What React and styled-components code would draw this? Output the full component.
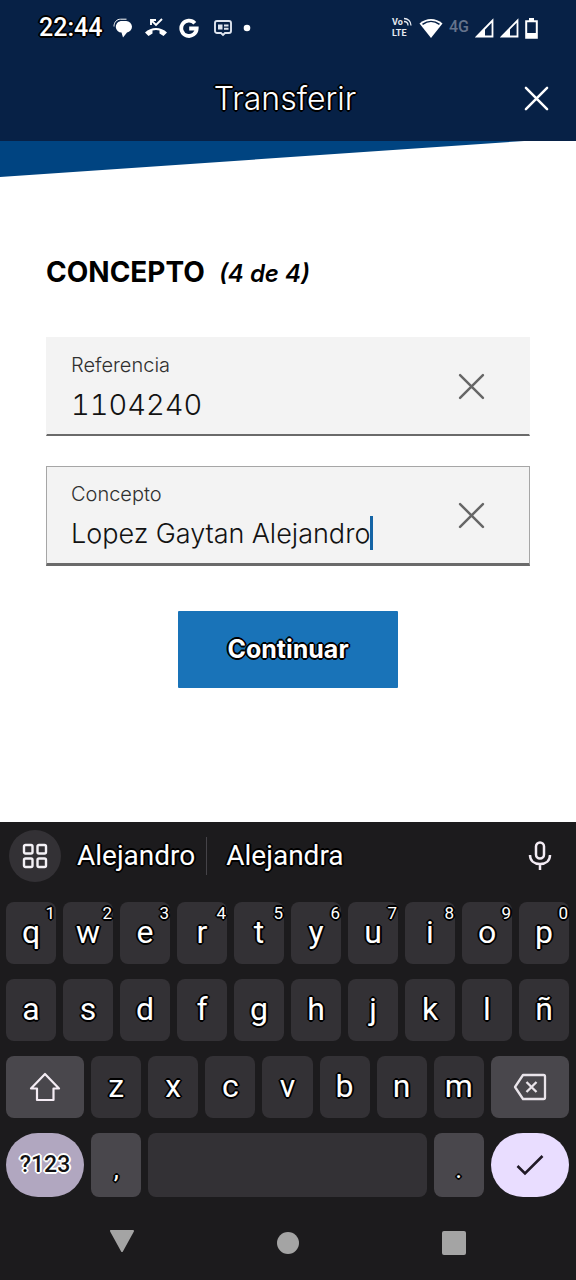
import React, { useState } from 'react';
import styled, { createGlobalStyle, css } from 'styled-components';

const GlobalStyle = createGlobalStyle`
  *, *::before, *::after { box-sizing: border-box; }
  body { margin: 0; background: #ffffff; }
  button, input { font: inherit; color: inherit; border: 0; padding: 0; margin: 0; background: none; }
  button { cursor: pointer; }
`;

const bankFont = css`font-family: Inter, "Open Sans", sans-serif;`;
const systemFont = css`font-family: Roboto, "Noto Sans", sans-serif;`;

const outline = css`
  text-shadow: ${({ $halo = '#000000' }) =>
    [[-1, -1], [0, -1], [1, -1], [-1, 0], [1, 0], [-1, 1], [0, 1], [1, 1], [-2, 0], [2, 0], [0, -2], [0, 2]]
      .map(([x, y]) => `${x}px ${y}px 0 ${$halo}`)
      .join(', ')};
`;

const Screen = styled.div`
  ${bankFont}
  min-height: 100vh;
  display: flex;
  flex-direction: column;
  color: #121212;
`;

const Header = styled.header`
  background: #072146;
  color: #ffffff;
`;

const StatusBar = styled.div`
  ${systemFont}
  display: flex;
  align-items: center;
  justify-content: space-between;
  height: 56px;
  padding: 0 38px 0 39px;
`;

const StatusGroup = styled.div`
  display: flex;
  align-items: center;
  gap: ${({ $gap }) => $gap}px;
`;

const Clock = styled.time`
  ${outline}
  font-size: 25px;
  font-weight: 500;
  line-height: 28px;
`;

const Network = styled.span`
  color: #65738c;
  font-size: 16px;
  font-weight: 500;
  line-height: 20px;
  padding-bottom: 3px;
`;

const TitleBar = styled.div`
  display: grid;
  grid-template-columns: 74px 1fr 80px;
  align-items: center;
  height: 85px;
`;

const Title = styled.h1`
  ${outline}
  grid-column: 2;
  margin: 0;
  font-size: 32px;
  font-weight: 300;
  line-height: 40px;
  text-align: center;
`;

const IconButton = styled.button`
  display: grid;
  place-items: center;
  height: 48px;
`;

const Wedge = styled.div`
  height: 36px;
  background: #004481;
  clip-path: polygon(0 0, 91% 0, 0 100%);
`;

const Form = styled.form`
  flex: 1;
  display: flex;
  flex-direction: column;
  padding: 78px 46px 40px;
`;

const Heading = styled.h2`
  display: flex;
  align-items: baseline;
  gap: 14px;
  margin: 0 0 46px;
  color: #000000;
  font-size: 28px;
  font-weight: 700;
  line-height: 34px;
`;

const Step = styled.em`
  font-size: 24px;
  font-weight: 600;
`;

const Fields = styled.div`
  display: grid;
  gap: 30px;
`;

const FieldBox = styled.div`
  display: grid;
  grid-template-columns: 1fr 116px;
  background: #f3f3f3;
  border: 1px solid ${({ $active }) => ($active ? '#a6a6a6' : '#f3f3f3')};
  border-bottom: ${({ $active }) => ($active ? 3 : 2)}px solid #6a6a6a;
`;

const FieldText = styled.div`
  display: grid;
  gap: 10px;
  padding: 15px 0 13px 24px;
`;

const Label = styled.label`
  color: #303030;
  font-size: 20px;
  font-weight: 300;
  line-height: 24px;
`;

const ValueLine = styled.div`
  display: flex;
  height: 34px;
`;

const Value = styled.input`
  field-sizing: content;
  max-width: 100%;
  height: 34px;
  font-size: ${({ $numeric }) => ($numeric ? 29 : 27)}px;
  font-variant-numeric: tabular-nums;
  font-weight: 300;
  outline: none;
  caret-color: transparent;
`;

const Caret = styled.span`
  flex: none;
  width: 3px;
  background: #1464a5;
`;

const ClearButton = styled(IconButton)`
  height: 100%;
`;

const SubmitButton = styled.button`
  ${outline}
  align-self: center;
  margin-top: 45px;
  padding: 0 49px 2px;
  height: 77px;
  border-radius: 1px;
  background: #1973b8;
  color: #ffffff;
  font-size: 25px;
  font-weight: 700;
  line-height: 32px;
`;

const Keyboard = styled.section`
  ${systemFont}
  background: #1c1b1d;
  color: #ffffff;
`;

const Suggestions = styled.div`
  display: flex;
  align-items: center;
  height: 80px;
  padding: 0 24px 12px 9px;
`;

const MenuButton = styled.button`
  display: grid;
  place-items: center;
  width: 52px;
  height: 52px;
  margin-right: 5px;
  border-radius: 50%;
  background: #333135;
`;

const Suggestion = styled.button`
  ${outline}
  padding: 0 11px;
  font-size: 28px;
  line-height: 38px;
`;

const Divider = styled.span`
  width: 1px;
  height: 38px;
  margin-right: 8px;
  background: #454348;
`;

const MicButton = styled(IconButton)`
  margin-left: auto;
`;

const Keys = styled.div`
  display: grid;
  gap: 15px;
  padding: 0 7px 0 6px;
`;

const KeyRow = styled.div`
  display: flex;
  gap: 7px;
`;

const tones = {
  letter: '#333135',
  modifier: '#49474c',
  mode: '#b1a7c0',
  enter: '#e9ddff',
};

const Key = styled.button`
  ${outline}
  position: relative;
  display: grid;
  place-items: center;
  flex: ${({ $span = 50 }) => $span} 1 0;
  min-width: 0;
  height: ${({ $tall }) => ($tall ? 64 : 62)}px;
  border-radius: ${({ $round }) => ($round ? 32 : 8)}px;
  background: ${({ $tone = 'letter' }) => tones[$tone]};
  font-size: 32px;
  line-height: 38px;
`;

const LetterKey = styled(Key)`
  padding-bottom: 3px;
`;

const ModeKey = styled(Key)`
  color: #121212;
  font-size: 23px;
  font-weight: 500;
`;

const PunctuationKey = styled(Key)`
  align-items: end;
  padding-bottom: 9px;
  font-size: 26px;
`;

const Hint = styled.span`
  position: absolute;
  top: 1px;
  right: 1px;
  font-size: 17px;
  line-height: 20px;
`;

const NavBar = styled.nav`
  display: grid;
  grid-template-columns: repeat(3, 1fr);
  align-items: center;
  height: 83px;
  padding: 8px 39px 0;
`;

const CloseIcon = ({ size, color, width }) => (
  <svg width={size} height={size} viewBox="0 0 26 26" fill="none" stroke={color} strokeWidth={width} strokeLinecap="round">
    <path d="M2 2 24 24M24 2 2 24" />
  </svg>
);

const ChatIcon = () => (
  <svg width="20" height="20" viewBox="0 0 20 20" fill="#fff">
    <path d="M7.500 3H13a5.800 5.800 0 0 1 6 5.800c0 3-2.300 5-5 5.700L10 19.500 8.500 14.500A5.800 5.800 0 0 1 7.500 3Z" />
    <path d="M1 8.500C1 4 4 1.200 7.500 1.200h6" fill="none" stroke="#fff" strokeWidth="1" />
    <path d="M2 7.500C2.500 4 5 2.500 8 2.500h6" fill="none" stroke="#072146" strokeWidth=".7" />
  </svg>
);

const MissedCallIcon = () => (
  <svg width="24" height="20" viewBox="0 0 24 20">
    <path d="M1 14.500C7 8.500 17 8.500 23 14.500l-3.500 3.500-4-2.500v-3c-2.500-.8-4.500-.8-7 0v3l-4 2.500Z" fill="#fff" />
    <path d="M7 7V2h5M7 2l5 5 6-6" fill="none" stroke="#fff" strokeWidth="1.900" />
  </svg>
);

const GoogleIcon = () => (
  <svg width="20" height="20" viewBox="0 0 20 20" fill="none" stroke="#fff" strokeWidth="3.800">
    <path d="M15.800 5.200A7.700 7.700 0 1 0 17.700 10.500H10.200" />
  </svg>
);

const CardIcon = () => (
  <svg width="22" height="18" viewBox="-4 0 22 18">
    <path d="M3 2h12a2 2 0 0 1 2 2v8a2 2 0 0 1-2 2h-4l-2 2-2-2H3a2 2 0 0 1-2-2V4a2 2 0 0 1 2-2Z" fill="none" stroke="#dfe5ef" strokeWidth="1.900" />
    <path d="M4 5.500h4.500v5H4zM10 5.500h4.500v2H10zM10 8.700h4.500v2H10z" fill="#dfe5ef" />
  </svg>
);

const DotIcon = () => (
  <svg width="8" height="8" viewBox="0 0 8 8"><circle cx="4" cy="4" r="3.300" fill="#fff" /></svg>
);

const VolteIcon = () => (
  <svg width="22" height="26" viewBox="0 0 22 26" fill="#e6eaf1" fontFamily="Roboto, sans-serif" fontWeight="700">
    <text x="1" y="10" fontSize="9">Vo</text>
    <text x="1" y="21" fontSize="9">LTE</text>
    <path d="M13 3.500c4 0 7 3 7 7M13 6.500c2.500 0 4 1.500 4 4" fill="none" stroke="#e6eaf1" strokeWidth="1.300" />
  </svg>
);

const WifiIcon = () => (
  <svg width="24" height="20" viewBox="0 0 24 20">
    <path d="M.5 5.500C7-.5 17-.5 23.500 5.500L12 20Z" fill="#fff" />
    <path d="M3.500 6.400c5.200-3.900 11.800-3.900 17 0" fill="none" stroke="#072146" strokeWidth="1.600" />
  </svg>
);

const SignalIcon = () => (
  <svg width="19" height="20" viewBox="0 0 19 20">
    <path d="M2 18.500 17.500 2.500v16Z" fill="none" stroke="#fff" strokeWidth="1.800" />
    <path d="M1 19 10 9.500V19Z" fill="#fff" />
  </svg>
);

const BatteryIcon = () => (
  <svg width="13" height="21" viewBox="0 0 13 21">
    <path d="M1.200 3.200h10.600v16.600H1.200Z" fill="none" stroke="#fff" strokeWidth="2" />
    <path d="M4 0h5v3H4ZM1 15h11v5H1Z" fill="#fff" />
  </svg>
);

const GridIcon = () => (
  <svg width="26" height="26" viewBox="0 0 26 26" fill="none" stroke="#f4f1f6" strokeWidth="2.400">
    {[[2, 2], [15.5, 2], [2, 15.5], [15.5, 15.5]].map(([x, y]) => (
      <rect key={`${x}-${y}`} x={x} y={y} width="8.500" height="8.500" rx="1.500" />
    ))}
  </svg>
);

const MicIcon = () => (
  <svg width="24" height="30" viewBox="0 0 24 30" fill="none" stroke="#f4ecf4" strokeWidth="2.500">
    <rect x="8" y="1.500" width="8" height="16" rx="4" />
    <path d="M2 14c0 5.500 4 9 10 9s10-3.500 10-9M12 23v6" />
  </svg>
);

const ShiftIcon = () => (
  <svg width="32" height="30" viewBox="0 0 32 30" fill="none" stroke="#f4ecf4" strokeWidth="2.200" strokeLinejoin="round">
    <path d="M16 2 30 16.500H24.500V28H8V16.500H2Z" />
  </svg>
);

const BackspaceIcon = () => (
  <svg width="34" height="28" viewBox="0 0 34 28" fill="none" stroke="#e9e4ea" strokeWidth="2.300" strokeLinejoin="round">
    <path d="M10 2H30.500A1.500 1.500 0 0 1 32 3.500V24.500A1.500 1.500 0 0 1 30.500 26H10L2 14Z" />
    <path d="M13.500 9 23.500 19M23.500 9 13.500 19" />
  </svg>
);

const CheckIcon = () => (
  <svg width="28" height="22" viewBox="0 0 28 22" fill="none" stroke="#201a26" strokeWidth="2.600">
    <path d="M1.500 12 9 19.500 26.500 2" />
  </svg>
);

const BackIcon = () => (
  <svg width="26" height="26" viewBox="0 0 26 26">
    <path d="M2 1H24L13 21Z" fill="#a4a4a4" stroke="#a4a4a4" strokeWidth="2" strokeLinejoin="round" />
  </svg>
);

const HomeIcon = () => (
  <svg width="22" height="22" viewBox="0 0 22 22"><circle cx="11" cy="11" r="11" fill="#a4a4a4" /></svg>
);

const RecentIcon = () => (
  <svg width="24" height="24" viewBox="0 0 24 24"><rect width="24" height="24" rx="2" fill="#a4a4a4" /></svg>
);

function Field({ id, label, initial, active, numeric }) {
  const [value, setValue] = useState(initial);
  return (
    <FieldBox $active={active}>
      <FieldText>
        <Label htmlFor={id}>{label}</Label>
        <ValueLine>
          <Value id={id} $numeric={numeric} value={value} onChange={(e) => setValue(e.target.value)} />
          {active && <Caret />}
        </ValueLine>
      </FieldText>
      <ClearButton type="button" aria-label={`Borrar ${label}`} onClick={() => setValue('')}>
        <CloseIcon size={27} color="#666666" width={2.4} />
      </ClearButton>
    </FieldBox>
  );
}

export default function App() {
  return (
    <Screen>
      <GlobalStyle />
      <Header>
        <StatusBar>
          <StatusGroup $gap={11}>
            <Clock>22:44</Clock>
            <ChatIcon />
            <MissedCallIcon />
            <GoogleIcon />
            <CardIcon />
            <DotIcon />
          </StatusGroup>
          <StatusGroup $gap={6}>
            <VolteIcon />
            <WifiIcon />
            <Network>4G</Network>
            <SignalIcon />
            <SignalIcon />
            <BatteryIcon />
          </StatusGroup>
        </StatusBar>
        <TitleBar>
          <Title>Transferir</Title>
          <IconButton type="button" aria-label="Cerrar">
            <CloseIcon size={25} color="#ffffff" width={2.6} />
          </IconButton>
        </TitleBar>
      </Header>
      <Wedge />
      <Form onSubmit={(e) => e.preventDefault()}>
        <Heading>
          CONCEPTO <Step>(4 de 4)</Step>
        </Heading>
        <Fields>
          <Field id="referencia" label="Referencia" initial="1104240" numeric />
          <Field id="concepto" label="Concepto" initial="Lopez Gaytan Alejandro" active />
        </Fields>
        <SubmitButton type="submit">Continuar</SubmitButton>
      </Form>
      <Keyboard>
        <Suggestions>
          <MenuButton type="button" aria-label="Menú"><GridIcon /></MenuButton>
          <Suggestion type="button">Alejandro</Suggestion>
          <Divider />
          <Suggestion type="button">Alejandra</Suggestion>
          <MicButton type="button" aria-label="Dictar"><MicIcon /></MicButton>
        </Suggestions>
        <Keys>
          <KeyRow>
            {[...'qwertyuiop'].map((letter, i) => (
              <LetterKey type="button" key={letter}>
                {letter}
                <Hint>{(i + 1) % 10}</Hint>
              </LetterKey>
            ))}
          </KeyRow>
          <KeyRow>
            {[...'asdfghjklñ'].map((letter) => <LetterKey type="button" key={letter}>{letter}</LetterKey>)}
          </KeyRow>
          <KeyRow>
            <Key type="button" $span={78} $tone="modifier" aria-label="Mayúsculas"><ShiftIcon /></Key>
            {[...'zxcvbnm'].map((letter) => <LetterKey type="button" key={letter}>{letter}</LetterKey>)}
            <Key type="button" $span={78} $tone="modifier" aria-label="Retroceso"><BackspaceIcon /></Key>
          </KeyRow>
          <KeyRow>
            <ModeKey type="button" $span={78} $tone="mode" $tall $round $halo="#ffffff">?123</ModeKey>
            <PunctuationKey type="button" $tone="modifier" $tall>,</PunctuationKey>
            <Key type="button" $span={278} $tall aria-label="Espacio" />
            <PunctuationKey type="button" $tone="modifier" $tall>.</PunctuationKey>
            <Key type="button" $span={78} $tone="enter" $tall $round aria-label="Aceptar"><CheckIcon /></Key>
          </KeyRow>
        </Keys>
        <NavBar>
          <IconButton type="button" aria-label="Atrás"><BackIcon /></IconButton>
          <IconButton type="button" aria-label="Inicio"><HomeIcon /></IconButton>
          <IconButton type="button" aria-label="Recientes"><RecentIcon /></IconButton>
        </NavBar>
      </Keyboard>
    </Screen>
  );
}
